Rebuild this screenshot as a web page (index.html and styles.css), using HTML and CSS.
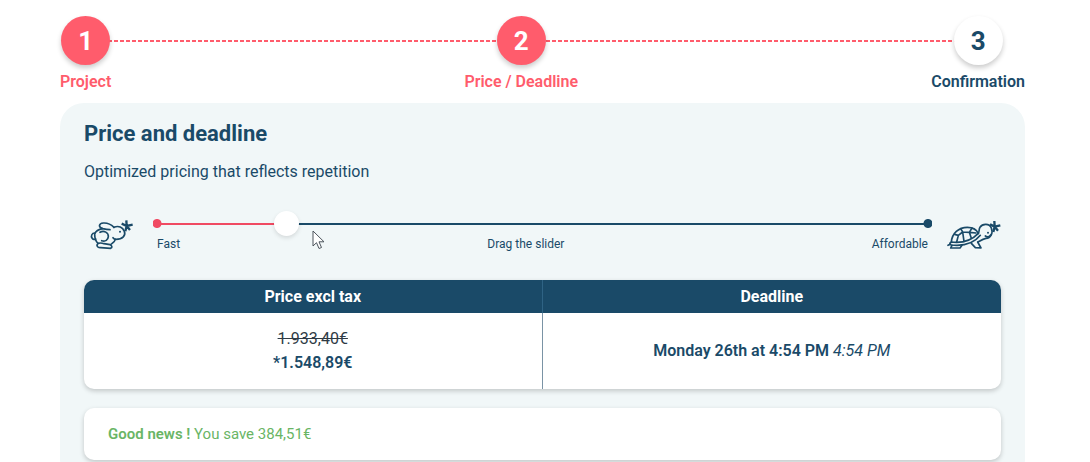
FILE: index.html
```html
<!DOCTYPE html>
<html lang="en">
<head>
    <meta charset="UTF-8">
    <meta name="viewport" content="width=device-width, initial-scale=1.0">
    <title>Price and deadline</title>
    <link rel="stylesheet" href="styles.css">
</head>
<body>
    <main class="container">
        <ol class="steps">
            <li class="step active"><span class="step-number">1</span>Project</li>
            <li class="step active"><span class="step-number">2</span>Price / Deadline</li>
            <li class="step"><span class="step-number">3</span>Confirmation</li>
        </ol>

        <section class="panel">
            <h1>Price and deadline</h1>
            <p class="subtitle">Optimized pricing that reflects repetition</p>

            <div class="slider-row">
                <svg class="animal" width="55" height="40" viewBox="0 0 165 120" aria-hidden="true">
                    <path d="M50 44C36 40 38 28 52 27C66 26 76 32 84 40M50 44C58 46 66 47 72 47"/>
                    <path d="M84 40C98 34 110 40 115 52C120 64 110 76 90 76C86 76 83 74 81 71"/>
                    <path d="M50 44C38 46 29 52 26 60C26 68 27 80 36 88"/>
                    <path d="M26 57C18 57 14 66 18 72C21 77 26 77 29 75"/>
                    <path d="M42 55C54 48 68 56 67 68C66 78 58 84 47 80"/>
                    <path d="M36 88C30 94 34 102 44 101L74 103C80 100 78 94 72 92L54 89C46 86 40 87 36 88M88 76C86 84 80 86 74 92"/>
                    <path class="bow" d="M122 36L107 29M122 36L121 19M122 36L140 32M122 36L132 48M122 36L118 52"/>
                    <circle cx="102" cy="53" r="3"/>
                </svg>
                <div class="slider">
                    <input type="range" id="delay" min="0" max="100" value="16" aria-labelledby="slider-label">
                    <div class="slider-labels">
                        <span>Fast</span>
                        <label id="slider-label" for="delay">Drag the slider</label>
                        <span>Affordable</span>
                    </div>
                </div>
                <svg class="animal" width="57" height="40" viewBox="0 0 171 120" aria-hidden="true">
                    <path d="M22 84C24 58 44 40 70 40C86 40 97 46 103 58"/>
                    <path d="M22 84C56 88 84 78 103 58M22 84C16 86 16 92 22 93C60 97 90 88 109 64"/>
                    <path d="M32 61L43 64L38 84M43 64L56 54L50 44M56 54L76 55L84 42M76 55L82 73M76 55L96 57M56 54L60 82"/>
                    <path d="M103 58C106 56 104 46 108 40C116 28 136 28 142 42C148 58 140 72 126 73C118 74 112 78 102 84"/>
                    <path d="M124 66C130 70 136 69 140 63"/>
                    <path d="M82 88L94 101L111 102L101 84M24 94L20 102L48 102L54 94M20 90L12 94"/>
                    <path class="bow" d="M152 38L138 31M152 38L151 21M152 38L169 34M152 38L162 50M152 38L148 54"/>
                    <circle cx="132" cy="56" r="3"/>
                </svg>
            </div>

            <table class="card quote">
                <thead>
                    <tr>
                        <th scope="col">Price excl tax</th>
                        <th scope="col">Deadline</th>
                    </tr>
                </thead>
                <tbody>
                    <tr>
                        <td><s>1.933,40€</s><br><strong>*1.548,89€</strong></td>
                        <td><strong>Monday 26th at 4:54 PM</strong> <em>4:54 PM</em></td>
                    </tr>
                </tbody>
            </table>

            <p class="card saving"><strong>Good news !</strong> You save 384,51€</p>
        </section>
    </main>

    <svg class="pointer" width="14" height="20" viewBox="0 0 14 20" aria-hidden="true">
        <path d="M1 1v15l3.500-3.300 2.500 5.800 2.500-1-2.500-5.700h5z"/>
    </svg>

    <script>
        const delay = document.getElementById("delay");

        delay.addEventListener("input", () => {
            delay.style.setProperty("--value", delay.value + "%");
        });
    </script>
</body>
</html>
```
FILE: styles.css
```css
:root {
    --navy: #1a4a68;
    --pink: #ff5c6c;
    --pink-dark: #f04a62;
    --green: #69b565;
    --panel: #f1f7f8;
}

* {
    box-sizing: border-box;
}

body {
    margin: 0;
    font-family: Roboto, sans-serif;
    font-size: 16px;
    line-height: 24px;
    color: var(--navy);
    background: #fff;
}

strong {
    font-weight: 600;
}

.container {
    margin: 0 65px 0 60px;
    padding-top: 16px;
}

/* Steps */
.steps {
    position: relative;
    display: flex;
    justify-content: space-between;
    margin: 0;
    padding: 0;
    list-style: none;
}

.steps::before {
    content: "";
    position: absolute;
    top: 24px;
    left: 48px;
    right: 48px;
    height: 2px;
    background: repeating-linear-gradient(90deg, var(--pink) 0 4px, transparent 4px 6px);
}

.step {
    position: relative;
    display: flex;
    flex-direction: column;
    align-items: center;
    gap: 5px;
    font-weight: 600;
}

.step-number {
    display: flex;
    align-items: center;
    justify-content: center;
    width: 49px;
    height: 49px;
    border-radius: 50%;
    font-size: 26px;
    font-weight: 700;
    background: #fff;
    box-shadow: 0 3px 5px rgba(0, 0, 0, 0.2);
}

.step.active {
    color: var(--pink);
}

.step.active .step-number {
    color: #fff;
    background: var(--pink);
}

/* Panel */
.panel {
    margin-top: 9px;
    padding: 18px 24px 24px;
    border-radius: 24px;
    background: var(--panel);
}

h1 {
    margin: 0;
    font-size: 22px;
    line-height: 26px;
}

.subtitle {
    margin: 13px 0 0;
}

/* Slider */
.slider-row {
    display: flex;
    align-items: flex-start;
    gap: 12px;
    margin-top: 27px;
    padding-left: 2px;
}

.animal {
    flex: none;
    margin-top: 3px;
    fill: none;
    stroke: var(--navy);
    stroke-width: 5;
    stroke-linecap: round;
    stroke-linejoin: round;
}

.animal .bow {
    stroke-width: 7;
    stroke-linecap: butt;
}

.animal circle {
    fill: var(--navy);
    stroke: none;
}

.slider {
    flex: 1;
}

input[type="range"] {
    --value: 16%;
    display: block;
    width: 100%;
    height: 25px;
    margin: 0;
    appearance: none;
    cursor: pointer;
    background:
        radial-gradient(circle at 4px 50%, var(--pink-dark) 4px, transparent 5px),
        radial-gradient(circle at calc(100% - 4px) 50%, var(--navy) 4px, transparent 5px),
        linear-gradient(var(--pink-dark), var(--pink-dark)) 4px 50% / var(--value) 2px no-repeat,
        linear-gradient(var(--navy), var(--navy)) 50% 50% / calc(100% - 8px) 2px no-repeat;
}

input[type="range"]::-webkit-slider-thumb {
    appearance: none;
    width: 25px;
    height: 25px;
    border-radius: 50%;
    background: #fff;
    box-shadow: 0 2px 4px rgba(0, 0, 0, 0.12);
}

.slider-labels {
    display: flex;
    justify-content: space-between;
    padding: 0 4px;
    font-size: 12px;
    line-height: 16px;
}

/* Cards */
.card {
    width: 100%;
    border-radius: 10px;
    background: #fff;
    box-shadow: 0 2px 5px rgba(0, 0, 0, 0.2);
}

.quote {
    margin-top: 26px;
    table-layout: fixed;
    border-spacing: 0;
    overflow: hidden;
    text-align: center;
}

.quote th {
    padding: 5px 4px 4px;
    color: #fff;
    background: var(--navy);
}

.quote td {
    height: 76px;
    padding: 0;
}

.quote th:first-child {
    border-right: 1px solid #2f6384;
}

.quote td:first-child {
    border-right: 1px solid #7a93a5;
}

.quote s {
    color: #2f3b45;
}

.saving {
    margin: 19px 0 0;
    padding: 14px 24px;
    font-size: 15px;
    color: var(--green);
}

.pointer {
    position: absolute;
    top: 230px;
    left: 312px;
    fill: #fff;
    stroke: #4c545c;
    pointer-events: none;
}
```
